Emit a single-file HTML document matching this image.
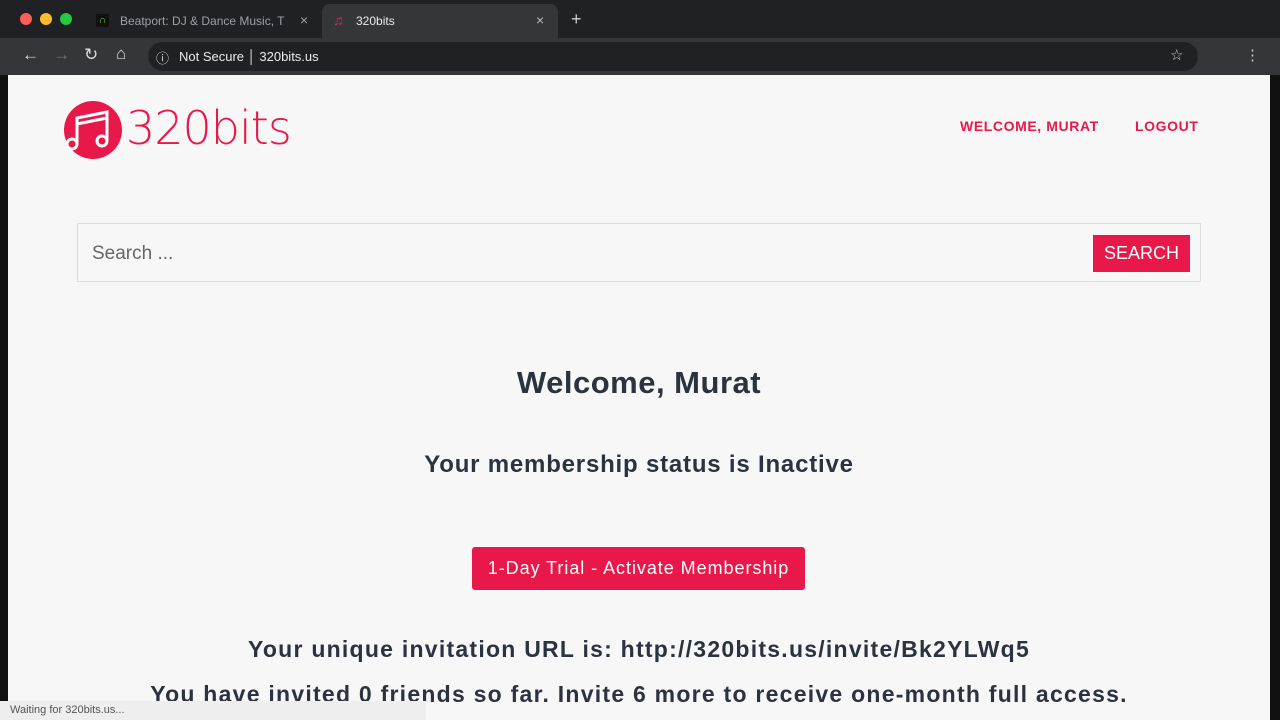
<!DOCTYPE html><html><head><style>
body{margin:0;width:1280px;height:720px;overflow:hidden;background:#111;font-family:"Liberation Sans",sans-serif;position:relative}
.tabs{position:absolute;top:0;left:0;width:1280px;height:38px;background:#202124}
.tb{position:absolute;top:38px;left:0;width:1280px;height:37px;background:#35363a}
.page{position:absolute;top:75px;left:8px;width:1262px;height:645px;background:#f7f7f7}
.dot{position:absolute;top:13px;width:12px;height:12px;border-radius:50%}
.c{text-align:center;position:absolute;left:0;width:1262px;color:#2b3340;font-weight:bold;white-space:nowrap}
</style></head><body>
<div class="tabs">
<div class="dot" style="left:20px;background:#fe5f57"></div>
<div class="dot" style="left:40px;background:#febc2e"></div>
<div class="dot" style="left:60px;background:#28c840"></div>
<div style="position:absolute;left:96px;top:14px;width:13px;height:13px;background:#111;border-radius:2px;color:#7c3;font-size:10px;text-align:center;line-height:13px">∩</div>
<div style="position:absolute;left:120px;top:14px;font-size:12px;color:#9aa0a6">Beatport: DJ &amp; Dance Music, T</div>
<div style="position:absolute;left:300px;top:12px;font-size:14px;color:#9aa0a6">×</div>
<div style="position:absolute;left:322px;top:4px;width:236px;height:34px;background:#35363a;border-radius:8px 8px 0 0"></div>
<div style="position:absolute;left:333px;top:12px;font-size:14px;color:#e0245e">♫</div>
<div style="position:absolute;left:356px;top:14px;font-size:12px;color:#e8eaed">320bits</div>
<div style="position:absolute;left:536px;top:12px;font-size:14px;color:#bbb">×</div>
<div style="position:absolute;left:571px;top:9px;font-size:18px;color:#ccc">+</div>
</div>
<div class="tb">
<div style="position:absolute;left:22px;top:7px;font-size:17px;color:#ddd">←</div>
<div style="position:absolute;left:53px;top:7px;font-size:17px;color:#777">→</div>
<div style="position:absolute;left:84px;top:7px;font-size:17px;color:#ddd">↻</div>
<div style="position:absolute;left:116px;top:6px;font-size:17px;color:#ddd">⌂</div>
<div style="position:absolute;left:148px;top:4px;width:1050px;height:29px;background:#202124;border-radius:15px"></div>
<div style="position:absolute;left:156px;top:10px;font-size:13px;color:#ddd">ⓘ</div>
<div style="position:absolute;left:179px;top:11px;font-size:13px;color:#e8eaed">Not Secure │ 320bits.us</div>
<div style="position:absolute;left:1170px;top:8px;font-size:15px;color:#ccc">☆</div>
<div style="position:absolute;left:1245px;top:8px;font-size:15px;color:#ccc">⋮</div>
</div>
<div class="page">
<svg style="position:absolute;left:55px;top:25px" width="60" height="60" viewBox="0 0 60 60"><circle cx="30" cy="30" r="29" fill="#e8194a"/><path d="M14 44V18l30-6v28" stroke="#fff" stroke-width="3" fill="none"/><path d="M14 24l30-6" stroke="#fff" stroke-width="3"/><circle cx="9" cy="44" r="5" fill="none" stroke="#fff" stroke-width="3"/><circle cx="39" cy="41" r="5" fill="none" stroke="#fff" stroke-width="3"/></svg>
<div style="position:absolute;left:118px;top:26px;font-size:46px;color:#e8194a;font-family:'DejaVu Sans',sans-serif;font-weight:200;letter-spacing:-1px">320bits</div>
<div style="position:absolute;left:952px;top:43px;font-size:14px;font-weight:bold;color:#e8194a;letter-spacing:0.6px">WELCOME, MURAT</div>
<div style="position:absolute;left:1127px;top:43px;font-size:14px;font-weight:bold;color:#e8194a;letter-spacing:0.6px">LOGOUT</div>
<div style="position:absolute;left:69px;top:148px;width:1122px;height:57px;border:1px solid #ddd;background:#f7f7f7"></div>
<div style="position:absolute;left:84px;top:168px;font-size:19px;color:#666">Search ...</div>
<div style="position:absolute;left:1085px;top:160px;width:97px;height:37px;background:#e8194a;color:#fff;font-size:18px;text-align:center;line-height:37px">SEARCH</div>
<div class="c" style="top:290px;font-size:31px;letter-spacing:0.5px">Welcome, Murat</div>
<div class="c" style="top:376px;font-size:24px;letter-spacing:0.8px">Your membership status is Inactive</div>
<div style="position:absolute;left:464px;top:472px;width:333px;height:43px;background:#e8194a;border-radius:3px;color:#fff;font-size:18px;text-align:center;line-height:43px;letter-spacing:0.95px;white-space:nowrap">1-Day Trial - Activate Membership</div>
<div class="c" style="top:561px;font-size:23px;letter-spacing:1.25px">Your unique invitation URL is: http://320bits.us/invite/Bk2YLWq5</div>
<div class="c" style="top:606px;font-size:23px;letter-spacing:1.25px">You have invited 0 friends so far. Invite 6 more to receive one-month full access.</div>
</div>
<div style="position:absolute;left:0;top:701px;width:426px;height:19px;background:#eee;font-size:11px;color:#555;line-height:19px;padding-left:10px;box-sizing:border-box">Waiting for 320bits.us...</div>
</body></html>
